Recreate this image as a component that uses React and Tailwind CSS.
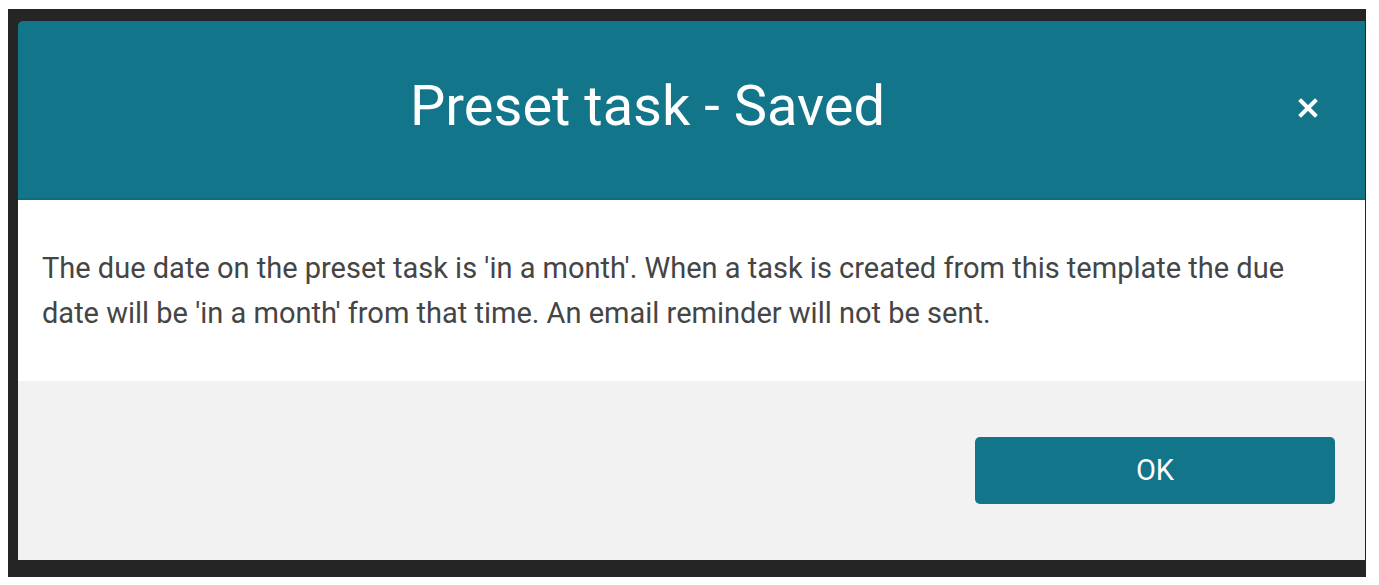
import React from "react";

const App = () => {
  return (
    <div className="w-[1379px] h-[585px] bg-white overflow-hidden" style={{ fontFamily: "Roboto, 'Liberation Sans', sans-serif" }}>
      <div className="ml-[8px] mt-[9px] w-[1358px] h-[568px] bg-[#252525] pt-[12px] pl-[10px] pr-[1px] pb-[17px]">
        <div className="h-full flex flex-col rounded-tl-[5px] overflow-hidden">
          <div className="h-[179px] shrink-0 bg-[#127589] border-b-2 border-[#0f6a7d] flex items-center justify-center pr-[88px] relative">
            <h1 className="text-[56px] text-white font-normal leading-none -mt-[8px]">Preset task - Saved</h1>
            <button className="absolute right-[44px] top-[74px] w-[26px] h-[26px] flex items-center justify-center">
              <svg width="22" height="22" viewBox="0 0 22 22">
                <path d="M4 4 L18 18 M18 4 L4 18" stroke="white" strokeWidth="4" strokeLinecap="square" />
              </svg>
            </button>
          </div>
          <div className="h-[181px] shrink-0 bg-white px-[24px] pt-[46px]">
            <p className="text-[29px] leading-[45px] text-[#454545]">
              The due date on the preset task is 'in a month'. When a task is created from this template the due date will be 'in a month' from that time. An email reminder will not be sent.
            </p>
          </div>
          <div className="flex-1 bg-[#f2f2f2] flex justify-end items-start pt-[56px] pr-[30px]">
            <button className="w-[360px] h-[67px] bg-[#127589] rounded-[5px] text-white text-[29px] font-normal">
              OK
            </button>
          </div>
        </div>
      </div>
    </div>
  );
};

export default App;
